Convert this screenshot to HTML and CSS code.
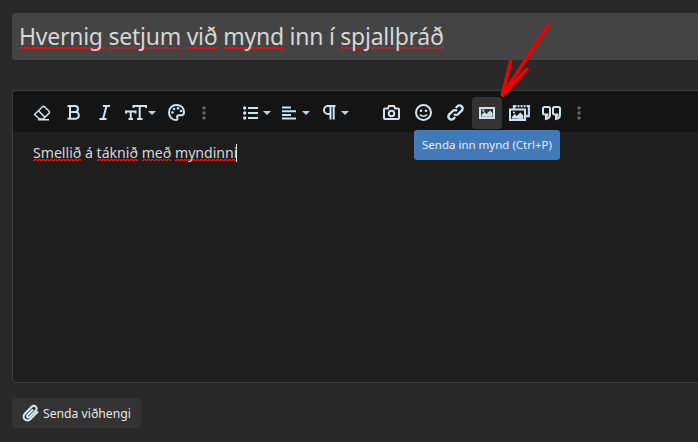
FILE: index.html
```html
<!DOCTYPE html>
<html lang="is">
<head>
    <meta charset="UTF-8">
    <title>Hvernig setjum við mynd inn í spjallþráð</title>
    <link rel="stylesheet" href="styles.css">
</head>
<body>
<div class="page">
    <div class="title_input"><span class="typo">Hvernig</span> <span class="typo">setjum</span> <span class="typo">við</span> <span class="typo">mynd</span> inn í <span class="typo">spjallþráð</span></div>

    <div class="editor">
        <div class="toolbar">
            <div class="group group_format">
                <button class="tool" type="button"><svg width="18" height="16" viewBox="0 0 18 16"><path d="M1.500 9.500 9.500 1.800l1-.5 1 .3 4.700 4.700.3 1-.5 1-5.800 5.700H6.500ZM5.500 5.800l6.500 6.500M5 14.700h11" class="line"/></svg></button>
                <button class="tool" type="button"><svg width="13" height="15" viewBox="0 0 13 15"><path d="M0.500 1H8a3 3 0 0 1 0 6H3h5.500a3.300 3.300 0 0 1 0 6.800H0.500M3 1v12.800" class="line bold"/></svg></button>
                <button class="tool" type="button"><svg width="11" height="15" viewBox="0 0 11 15"><path d="M4 1h7M0.500 14h7M7.500 1 4 14" class="line bold"/></svg></button>
                <button class="tool wide tight" type="button"><svg width="22" height="15" viewBox="0 0 22 15"><path d="M8.500 3V1H21v2M14.700 1v13M12 14h5.500M1 8.500V6.500h9.500v2M5.700 6.500V14M3.500 14h4.500" class="line bold"/></svg><i class="caret"></i></button>
                <button class="tool" type="button"><svg width="17" height="17" viewBox="0 0 17 17"><path d="M8.500 1C4 1 1 4.300 1 8.500S4.300 16 7.800 16c1.700 0 2-1.200 1.500-2.300-.6-1.400.2-2.500 1.700-2.500h2.300c1.900 0 2.700-1.100 2.700-3C15.900 4 13 1 8.500 1Z" class="line bold"/><circle cx="4.500" cy="8.500" r="1.300" class="fill"/><circle cx="6" cy="5" r="1.300" class="fill"/><circle cx="10" cy="4.200" r="1.300" class="fill"/><circle cx="13" cy="7" r="1.300" class="fill"/></svg></button>
                <button class="tool narrow" type="button"><svg width="4" height="14" viewBox="0 0 4 14"><circle cx="2" cy="2" r="1.800" class="dim"/><circle cx="2" cy="7" r="1.800" class="dim"/><circle cx="2" cy="12" r="1.800" class="dim"/></svg></button>
            </div>
            <div class="group group_para">
                <button class="tool wide" type="button"><svg width="15" height="14" viewBox="0 0 15 14"><circle cx="1.700" cy="2" r="1.700" class="fill"/><circle cx="1.700" cy="7" r="1.700" class="fill"/><circle cx="1.700" cy="12" r="1.700" class="fill"/><path d="M5 2h10M5 7h10M5 12h10" class="line bold"/></svg><i class="caret"></i></button>
                <button class="tool wide" type="button"><svg width="15" height="14" viewBox="0 0 15 14"><path d="M0 1.500h9M0 5.200h14M0 8.900h9M0 12.600h14" class="line bold"/></svg><i class="caret"></i></button>
                <button class="tool wide" type="button"><svg width="13" height="15" viewBox="0 0 13 15"><path d="M12.500 1H5a4 4 0 0 0 0 8h2.500M7.500 1v13.500M10.700 1v13.500" class="line bold"/></svg><i class="caret"></i></button>
            </div>
            <div class="group group_insert">
                <button class="tool" type="button"><svg width="17" height="15" viewBox="0 0 17 15"><path d="M1 4.500A1 1 0 0 1 2 3.500h3L6 1h5l1 2.500h3a1 1 0 0 1 1 1V13a1 1 0 0 1-1 1H2a1 1 0 0 1-1-1Z" class="line bold"/><circle cx="8.500" cy="8.500" r="2.800" class="line bold"/></svg></button>
                <button class="tool" type="button"><svg width="17" height="17" viewBox="0 0 17 17"><circle cx="8.500" cy="8.500" r="7.500" class="line bold"/><circle cx="6" cy="6.700" r="1.300" class="fill"/><circle cx="11" cy="6.700" r="1.300" class="fill"/><path d="M5 10.500c1.800 2.200 5.200 2.200 7 0" class="line"/></svg></button>
                <button class="tool" type="button"><svg width="17" height="17" viewBox="0 0 17 17"><path d="M7 10a3 3 0 0 0 4.300 0l3.400-3.400a3 3 0 0 0-4.300-4.300L8.800 4M10 7a3 3 0 0 0-4.300 0L2.300 10.400a3 3 0 0 0 4.300 4.300L8.200 13" class="line heavy"/></svg></button>
                <button class="tool active" type="button"><svg width="16" height="12" viewBox="0 0 16 12"><rect x="1" y="1" width="14" height="10" class="line bold"/><path d="M2.500 9.700V8l3-3 2 2 3.500-3.500 2.500 2.500v3.700Z" class="fill"/><circle cx="4.300" cy="3.700" r="1.100" class="fill"/></svg></button>
                <button class="tool" type="button"><svg width="21" height="16" viewBox="0 0 21 16"><path d="M5 4V1h15v10h-3" class="line blue"/><path d="M8 0v3M11 0v3M14 0v3M17 0v3" class="line gap"/><rect x="1" y="4.500" width="15" height="10.500" class="line bold"/><path d="M2.800 13.500V12l3-3 2 2 3.500-3.500 3 3v3.500Z" class="fill"/><circle cx="5" cy="7.500" r="1.100" class="fill"/></svg></button>
                <button class="tool" type="button"><svg width="19" height="16" viewBox="0 0 19 16"><path d="M2.500 2h4A1.500 1.500 0 0 1 8 3.500v6c0 2.500-1.500 4-4 4.500v-2.500c1-.3 1.500-1 1.500-2h-3A1.500 1.500 0 0 1 1 8V3.500A1.500 1.500 0 0 1 2.500 2ZM12.500 2h4A1.500 1.500 0 0 1 18 3.500v6c0 2.500-1.500 4-4 4.500v-2.500c1-.3 1.500-1 1.500-2h-3A1.500 1.500 0 0 1 11 8V3.500A1.500 1.500 0 0 1 12.500 2Z" class="line bold"/></svg></button>
                <button class="tool narrow" type="button"><svg width="4" height="14" viewBox="0 0 4 14"><circle cx="2" cy="2" r="1.800" class="dim"/><circle cx="2" cy="7" r="1.800" class="dim"/><circle cx="2" cy="12" r="1.800" class="dim"/></svg></button>
            </div>
        </div>
        <div class="tooltip">Senda inn mynd (Ctrl+P)</div>
        <div class="editor_body"><span class="typo">Smellið</span> á <span class="typo">táknið</span> <span class="typo">með</span> <span class="typo">myndinni</span><span class="cursor"></span></div>
    </div>

    <button class="attach" type="button"><svg width="18" height="18" viewBox="0 0 18 18"><path d="M16 7.500 8.500 15c-1.800 1.800-4.300 1.800-5.800.3s-1.500-4 .3-5.800l6.700-6.700c1.300-1.300 3-1.300 4.100-.2s1.100 2.800-.2 4.100L7.400 12.900c-.7.700-1.600.7-2.100.2s-.5-1.400.2-2.100L11 5.500" class="clip"/></svg>Senda viðhengi</button>
</div>

<svg class="arrow" width="60" height="90" viewBox="0 0 60 90">
    <path d="M50 1 3 73M12 37 3 73 29 45" fill="none" stroke="#f00000" stroke-width="3.500"/>
</svg>
</body>
</html>
```

FILE: styles.css
```css
html, body {
    margin: 0;
    height: 100%;
    overflow: hidden;
}

body {
    position: relative;
    background-color: #292929;
    font-family: "Noto Sans", "Open Sans", sans-serif;
    color: #d8d8d8;
}

.page {
    padding: 13px 0 0 12px;
}

.title_input {
    height: 47px;
    line-height: 46px;
    padding-left: 7px;
    background-color: #444;
    border-radius: 4px 0 0 4px;
    font-size: 23px;
    letter-spacing: -0.25px;
    color: #d6d6d6;
    white-space: nowrap;
}

/* spell check squiggle, smaller than the wavy text-decoration */
.typo {
    background-image:
        linear-gradient(45deg, transparent 62%, #d81818 62%, #d81818 88%, transparent 88%),
        linear-gradient(135deg, transparent 62%, #d81818 62%, #d81818 88%, transparent 88%);
    background-size: 4px 2px;
    background-repeat: repeat-x;
    background-position: 0 calc(100% - 1px), 2px calc(100% - 1px);
}

.title_input .typo {
    background-position: 0 calc(100% - 3px), 2px calc(100% - 3px);
}

.editor {
    position: relative;
    margin-top: 30px;
    height: 291px;
    border: 1px solid #3d3d3d;
    border-right: 0;
    border-radius: 4px 0 0 4px;
    background-color: #1e1e1e;
}

.toolbar {
    display: flex;
    align-items: center;
    height: 39px;
    padding: 2px 0 0 13px;
    background-color: #141414;
    border-radius: 4px 0 0 0;
}

.group {
    display: flex;
    align-items: center;
}

.group_para {
    margin-left: 21px;
}

.group_insert {
    margin-left: 20px;
}

.tool {
    display: flex;
    align-items: center;
    justify-content: center;
    gap: 5px;
    width: 31.600px;
    height: 32px;
    padding: 0;
    background: none;
    border: 0;
    border-radius: 4px;
}

.group_insert .tool {
    width: 32px;
}

.tool.wide {
    width: 39.500px;
}

.tool.tight {
    gap: 1px;
}

.group .tool.narrow {
    width: 24px;
}

.group .tool.active {
    width: 30px;
    margin: 0 1px;
    background-color: #333;
}

.caret {
    width: 0;
    height: 0;
    border-left: 4px solid transparent;
    border-right: 4px solid transparent;
    border-top: 4px solid #c4d4de;
}

.line {
    fill: none;
    stroke: #d2e2ec;
    stroke-width: 1.500;
}

.line.bold {
    stroke-width: 2;
}

.line.heavy {
    stroke-width: 2.400;
}

.line.gap {
    stroke: #141414;
    stroke-width: 1;
}

.line.blue {
    stroke: #c0d6e4;
    stroke-width: 2.400;
}

.fill {
    fill: #d2e2ec;
}

.dim {
    fill: #5c6468;
}

.tooltip {
    position: absolute;
    left: 401px;
    top: 39px;
    padding: 0 8px;
    height: 30px;
    line-height: 30px;
    background-color: #4279b8;
    border-radius: 3px;
    font-size: 11.500px;
    color: #e8eef5;
    white-space: nowrap;
}

.editor_body {
    padding: 10px 20px;
    font-size: 14.100px;
    line-height: 21px;
    color: #d8d8d8;
}

.cursor {
    display: inline-block;
    width: 1px;
    height: 18px;
    margin-left: -1px;
    vertical-align: -4px;
    background-color: #e8e8e8;
}

.attach {
    display: flex;
    align-items: center;
    gap: 3px;
    height: 30px;
    margin-top: 15px;
    padding: 0 10px;
    background-color: #333;
    border: 0;
    border-radius: 4px;
    font-family: inherit;
    font-size: 12.200px;
    color: #e6e6e6;
}

.clip {
    fill: none;
    stroke: #dfeaf2;
    stroke-width: 2;
}

.arrow {
    position: absolute;
    left: 499px;
    top: 23px;
}
```
